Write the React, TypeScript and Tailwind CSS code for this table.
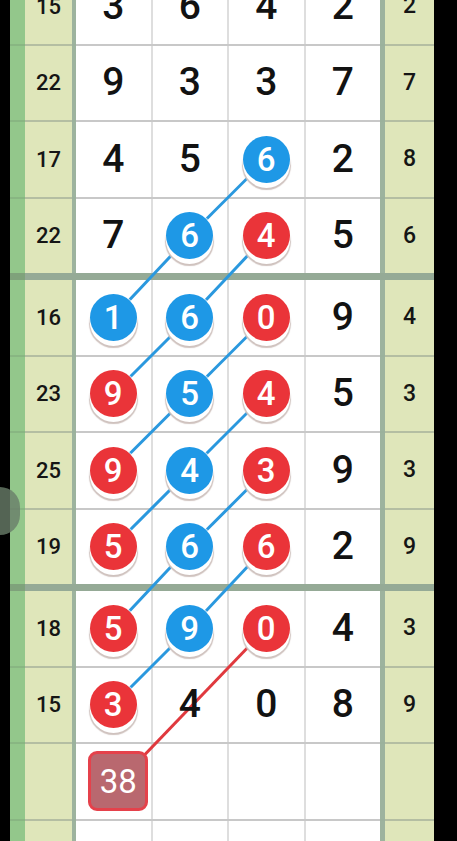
import React from "react";

type Row = { s?: number; d: number[]; r?: number; b?: Record<number, "blue" | "red">; box?: boolean };

const rows: Row[] = [
  { s: 15, d: [3, 6, 4, 2], r: 2 },
  { s: 22, d: [9, 3, 3, 7], r: 7 },
  { s: 17, d: [4, 5, 6, 2], r: 8, b: { 2: "blue" } },
  { s: 22, d: [7, 6, 4, 5], r: 6, b: { 1: "blue", 2: "red" } },
  { s: 16, d: [1, 6, 0, 9], r: 4, b: { 0: "blue", 1: "blue", 2: "red" } },
  { s: 23, d: [9, 5, 4, 5], r: 3, b: { 0: "red", 1: "blue", 2: "red" } },
  { s: 25, d: [9, 4, 3, 9], r: 3, b: { 0: "red", 1: "blue", 2: "red" } },
  { s: 19, d: [5, 6, 6, 2], r: 9, b: { 0: "red", 1: "blue", 2: "red" } },
  { s: 18, d: [5, 9, 0, 4], r: 3, b: { 0: "red", 1: "blue", 2: "red" } },
  { s: 15, d: [3, 4, 0, 8], r: 9, b: { 0: "red" } },
  { d: [], box: true },
  { d: [] },
];

const TOP = -31;
const Y = (i: number) => TOP + Math.floor(i / 4) * 311 + (i % 4) * 76.5 + 37.25;
const X = (c: number) => 76 + 37.25 + c * 76.5;

const blueLines: [number, number, number, number][] = [
  [2, 2, 3, 1],
  [3, 1, 4, 0],
  [3, 2, 4, 1],
  [4, 1, 5, 0],
  [4, 2, 5, 1],
  [5, 1, 6, 0],
  [5, 2, 6, 1],
  [6, 1, 7, 0],
  [6, 2, 7, 1],
  [7, 1, 8, 0],
  [7, 2, 8, 1],
  [8, 1, 9, 0],
];

function Ball({ n, color }: { n: number; color: "blue" | "red" }) {
  return (
    <div
      className={
        "relative z-[2] w-[47px] h-[47px] rounded-full flex items-center justify-center text-white text-[33px] font-medium leading-none shadow-[0_0_0_1px_rgba(255,255,255,0.7),0_5px_0_0_#ffffff,0_6px_1px_1px_#cfc2be] " +
        (color === "blue" ? "bg-[#1e98e6]" : "bg-[#ea3439]")
      }
    >
      {n}
    </div>
  );
}

function ThinSep() {
  return (
    <div className="flex h-[2px]">
      <div className="w-[15px] bg-[#88b682]" />
      <div className="w-[47px] bg-[#b4bea2]" />
      <div className="w-[4px] bg-[#9bb19c]" />
      <div className="w-[304px] bg-[#c8c8c8]" />
      <div className="w-[5px] bg-[#9bb19c]" />
      <div className="w-[49px] bg-[#b4bea2]" />
    </div>
  );
}

function ThickSep() {
  return (
    <div className="flex h-[7px]">
      <div className="w-[15px] bg-[#7fa27b]" />
      <div className="w-[409px] bg-[#95aa96]" />
    </div>
  );
}

function RowView({ row }: { row: Row }) {
  return (
    <div className="flex h-[74.5px]">
      <div className="w-[15px] bg-[#93c78b]" />
      <div className="w-[47px] bg-[#dfe6ba] flex items-center justify-center text-[22px] font-medium text-[#151515]">
        {row.s ?? ""}
      </div>
      <div className="w-[4px] bg-[#9db39e]" />
      <div className="w-[304px] grid grid-cols-4 gap-x-[2px] bg-[#dedede]">
        {[0, 1, 2, 3].map((c) => (
          <div key={c} className="bg-white flex items-center justify-center">
            {row.box && c === 0 ? (
              <div className="relative z-[2] ml-[10px] w-[60px] h-[60px] rounded-[9px] border-[3px] border-[#e5414b] bg-[#b9686f] flex items-center justify-center text-white text-[33px] leading-none">
                38
              </div>
            ) : row.d.length ? (
              row.b && row.b[c] ? (
                <Ball n={row.d[c]} color={row.b[c]} />
              ) : (
                <span className="relative z-[2] text-[39px] font-medium leading-none text-[#121212]">{row.d[c]}</span>
              )
            ) : null}
          </div>
        ))}
      </div>
      <div className="w-[5px] bg-[#9db39e]" />
      <div className="w-[49px] bg-[#dfe6ba] flex items-center justify-center text-[23px] font-medium text-[#151515]">
        {row.r ?? ""}
      </div>
    </div>
  );
}

export default function App() {
  const items: React.ReactNode[] = [];
  rows.forEach((row, i) => {
    items.push(<RowView key={"r" + i} row={row} />);
    if (i < rows.length - 1) {
      items.push(i % 4 === 3 ? <ThickSep key={"s" + i} /> : <ThinSep key={"s" + i} />);
    }
  });
  return (
    <div
      className="relative w-[457px] h-[841px] overflow-hidden bg-black"
      style={{ fontFamily: "Roboto, 'Noto Sans', sans-serif" }}
    >
      <div className="flex">
        <div className="w-[10px] shrink-0" />
        <div className="flex flex-col w-[424px] mt-[-31px]">{items}</div>
      </div>
      <svg className="absolute inset-0 z-[1] pointer-events-none" width={457} height={841}>
        {blueLines.map(([r1, c1, r2, c2], k) => (
          <line key={k} x1={X(c1)} y1={Y(r1)} x2={X(c2)} y2={Y(r2)} stroke="#2a98de" strokeWidth={3} />
        ))}
        <line x1={X(2)} y1={Y(8)} x2={X(0) + 6} y2={Y(10)} stroke="#e0393e" strokeWidth={3} />
      </svg>
      <div className="absolute left-0 top-[487px] z-[3] w-[20px] h-[48px] rounded-r-full bg-[rgba(105,125,105,0.8)]" />
    </div>
  );
}
